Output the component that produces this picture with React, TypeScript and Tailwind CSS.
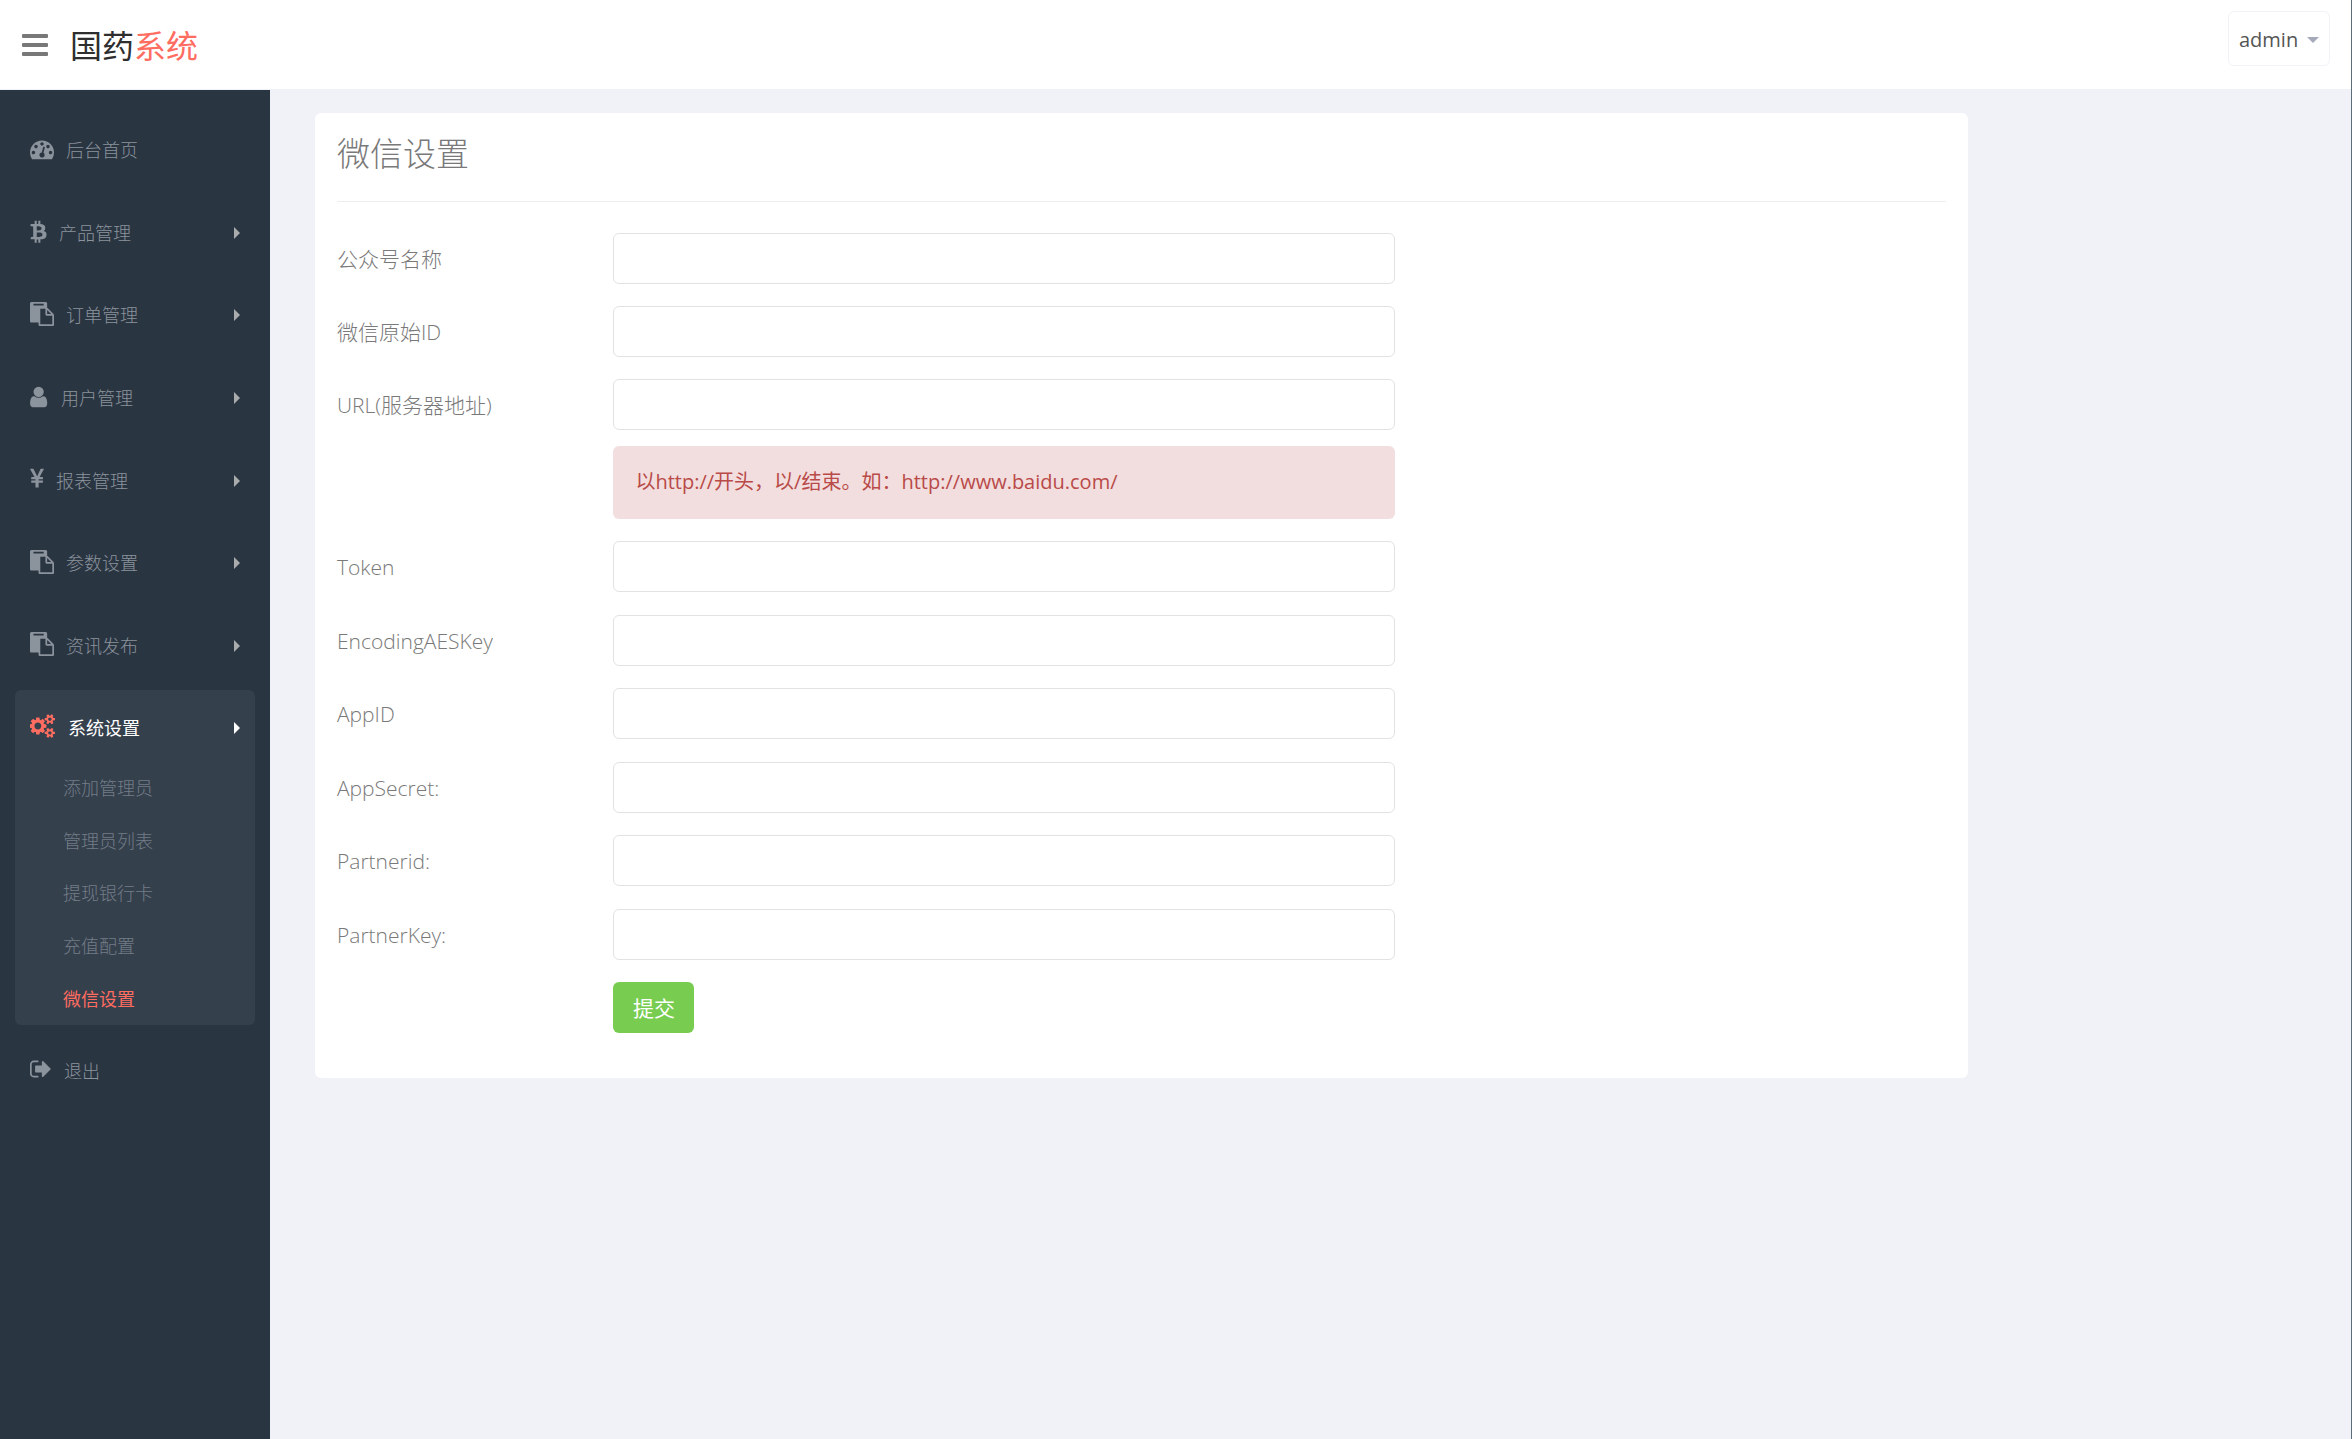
import React from 'react';

interface Glyph {
  viewBox: string;
  width: string;
  path: string;
}

// Font Awesome 4 shapes, cropped to their advance width
const GLYPHS = {
  dashboard: {
    viewBox: '0 0 1792 1792',
    width: 'w-[24px]',
    path: 'M384 1152q0-53-37.5-90.5t-90.5-37.5-90.5 37.5-37.5 90.5 37.5 90.5 90.5 37.5 90.5-37.5 37.5-90.5zm192-448q0-53-37.5-90.5t-90.5-37.5-90.5 37.5-37.5 90.5 37.5 90.5 90.5 37.5 90.5-37.5 37.5-90.5zm428 481l101-382q6-26-7.5-48.5t-38.5-29.5-48 6.5-30 39.5l-101 382q-60 5-107 43.5t-63 98.5q-20 77 20 146t117 89 146-20 89-117q16-60-6-117t-72-91zm660-33q0-53-37.5-90.5t-90.5-37.5-90.5 37.5-37.5 90.5 37.5 90.5 90.5 37.5 90.5-37.5 37.5-90.5zm-640-640q0-53-37.5-90.5t-90.5-37.5-90.5 37.5-37.5 90.5 37.5 90.5 90.5 37.5 90.5-37.5 37.5-90.5zm448 192q0-53-37.5-90.5t-90.5-37.5-90.5 37.5-37.5 90.5 37.5 90.5 90.5 37.5 90.5-37.5 37.5-90.5zm320 448q0 261-141 483-19 29-54 29h-1402q-35 0-54-29-141-221-141-483 0-182 71-348t191-286 286-191 348-71 348 71 286 191 191 286 71 348z',
  },
  bitcoin: {
    viewBox: '64 0 1280 1792',
    width: 'w-[17px]',
    path: 'M1217 629q18 182-131 258 117 28 175 103t45 214q-7 71-32.5 125t-64.5 89-97 58.5-121.5 34.5-145.5 15v255h-154v-251q-80 0-122-1v252h-154v-255q-18 0-54-.5t-55-.5h-200l31-183h111q50 0 58-51v-402h16q-6-1-16-1v-287q-13-68-89-68h-111v-164l212 1q64 0 97-1v-252h154v247q82-2 122-2v-245h154v252q79 7 140 22.5t113 45 82.5 78 36.5 114.5zm-215 545q0-36-15-64t-37-46-57.5-30.5-65.5-18.5-74-9-69-3-64.5 1-47.5 1v338q8 0 37 .5t48 .5 53-1.5 58.5-4 57-8.5 55.5-14 47.5-21 39.5-30 24.5-40 9.5-51zm-71-475q0-33-12.5-58.5t-30.5-42-48-28-55-16.5-61.5-8-58-2.5-54 1-39.5.5v307q5 0 34.5.5t46.5 0 50-2 55-5.5 51.5-11 48.5-18.5 37-27 27-38.5 9-51z',
  },
  paste: {
    viewBox: '0 0 1792 1792',
    width: 'w-[24px]',
    path: 'M768 1664h896v-640h-416q-40 0-68-28t-28-68v-416h-384v1152zm256-1440v-64q0-13-9.5-22.5t-22.5-9.5h-704q-13 0-22.5 9.5t-9.5 22.5v64q0 13 9.5 22.5t22.5 9.5h704q13 0 22.5-9.5t9.5-22.5zm256 672h299l-299-299v299zm512 128v672q0 40-28 68t-68 28h-960q-40 0-68-28t-28-68v-160h-544q-40 0-68-28t-28-68v-1344q0-40 28-68t68-28h1088q40 0 68 28t28 68v328q21 13 36 28l408 408q28 28 48 76t20 88z',
  },
  user: {
    viewBox: '256 0 1408 1792',
    width: 'w-[19px]',
    path: 'M1536 1399q0 109-62.5 187t-150.5 78h-854q-88 0-150.5-78t-62.5-187q0-85 8.5-160.5t31.5-152 58.5-131 94-89 134.5-34.5q131 128 313 128t313-128q76 0 134.5 34.5t94 89 58.5 131 31.5 152 8.5 160.5zm-256-887q0 159-112.5 271.5t-271.5 112.5-271.5-112.5-112.5-271.5 112.5-271.5 271.5-112.5 271.5 112.5 112.5 271.5z',
  },
  yen: {
    viewBox: '382 0 1027 1792',
    width: 'w-[14px]',
    path: 'M985.5 1536h-172q-13 0-22.5-9t-9.5-23v-330h-288q-13 0-22.5-9t-9.5-23v-103q0-13 9.5-22.5t22.5-9.5h288v-85h-288q-13 0-22.5-9t-9.5-23v-104q0-13 9.5-22.5t22.5-9.5h214l-321-578q-8-16 0-32 10-16 28-16h194q19 0 29 18l215 425q19 38 56 125 10-24 30.5-68t27.5-61l191-420q8-19 29-19h191q17 0 27 16 9 14 1 31l-313 579h215q13 0 22.5 9.5t9.5 22.5v104q0 14-9.5 23t-22.5 9h-290v85h290q13 0 22.5 9.5t9.5 22.5v103q0 14-9.5 23t-22.5 9h-290v330q0 13-9.5 22.5t-22.5 9.5z',
  },
  cogs: {
    viewBox: '0 0 1920 1792',
    width: 'w-[26px]',
    path: 'M832 896q0-106-75-181t-181-75-181 75-75 181 75 181 181 75 181-75 75-181zm768 512q0-52-38-90t-90-38-90 38-38 90q0 53 37.5 90.5t90.5 37.5 90.5-37.5 37.5-90.5zm0-1024q0-52-38-90t-90-38-90 38-38 90q0 53 37.5 90.5t90.5 37.5 90.5-37.5 37.5-90.5zm-384 421v185q0 10-7 19.5t-16 10.5l-155 24q-11 35-32 76 34 48 90 115 7 11 7 20 0 12-7 19-23 30-82.5 89.5t-78.5 59.5q-11 0-21-7l-115-90q-37 19-77 31-11 108-23 155-7 24-30 24h-186q-11 0-20-7.5t-10-17.5l-23-153q-34-10-75-31l-118 89q-7 7-20 7-11 0-21-8-144-133-144-160 0-9 7-19 10-14 41-53t47-61q-23-44-35-82l-152-24q-10-1-17-9.5t-7-19.5v-185q0-10 7-19.5t16-10.5l155-24q11-35 32-76-34-48-90-115-7-11-7-20 0-12 7-20 22-30 82-89t79-59q11 0 21 7l115 90q34-18 77-32 11-108 23-154 7-24 30-24h186q11 0 20 7.5t10 17.5l23 153q34 10 75 31l118-89q8-7 20-7 11 0 21 8 144 133 144 160 0 8-7 19-12 16-42 54t-45 60q23 48 34 82l152 23q10 2 17 10.5t7 19.5zm640 533v140q0 16-149 31-12 27-30 52 51 113 51 138 0 4-4 7-122 71-124 71-8 0-46-47t-52-68q-20 2-30 2t-30-2q-14 21-52 68t-46 47q-2 0-124-71-4-3-4-7 0-25 51-138-18-25-30-52-149-15-149-31v-140q0-16 149-31 13-29 30-52-51-113-51-138 0-4 4-7 4-2 35-20t59-34 30-16q8 0 46 46.5t52 67.5q20-2 30-2t30 2q51-71 92-112l6-2q4 0 124 70 4 3 4 7 0 25-51 138 17 23 30 52 149 15 149 31zm0-1024v140q0 16-149 31-12 27-30 52 51 113 51 138 0 4-4 7-122 71-124 71-8 0-46-47t-52-68q-20 2-30 2t-30-2q-14 21-52 68t-46 47q-2 0-124-71-4-3-4-7 0-25 51-138-18-25-30-52-149-15-149-31v-140q0-16 149-31 13-29 30-52-51-113-51-138 0-4 4-7 4-2 35-20t59-34 30-16q8 0 46 46.5t52 67.5q20-2 30-2t30 2q51-71 92-112l6-2q4 0 124 70 4 3 4 7 0 25-51 138 17 23 30 52 149 15 149 31z',
  },
  signOut: {
    viewBox: '64 0 1664 1792',
    width: 'w-[22px]',
    path: 'M704 1440q0 4 1 20t.5 26.5-3 23.5-10 19.5-20.5 6.5h-320q-119 0-203.5-84.5t-84.5-203.5v-704q0-119 84.5-203.5t203.5-84.5h320q13 0 22.5 9.5t9.5 22.5q0 4 1 20t.5 26.5-3 23.5-10 19.5-20.5 6.5h-320q-66 0-113 47t-47 113v704q0 66 47 113t113 47h312l11.5 1 11.5 3 8 5.5 7 9 2 13.5zm928-544q0 26-19 45l-544 544q-19 19-45 19t-45-19-19-45v-288h-448q-26 0-45-19t-19-45v-384q0-26 19-45t45-19h448v-288q0-26 19-45t45-19 45 19l544 544q19 19 19 45z',
  },
} satisfies Record<string, Glyph>;

type IconName = keyof typeof GLYPHS;

const Icon: React.FC<{ name: IconName; className?: string }> = ({ name, className = '' }) => {
  const glyph = GLYPHS[name];
  return (
    <svg
      viewBox={glyph.viewBox}
      className={`h-[24px] ${glyph.width} mr-3 mb-[3px] shrink-0 ${className}`}
      fill="currentColor"
      aria-hidden="true"
    >
      <path d={glyph.path} />
    </svg>
  );
};

interface MenuItem {
  label: string;
  icon: IconName;
  expandable?: boolean;
}

const MENU: MenuItem[] = [
  { label: '后台首页', icon: 'dashboard' },
  { label: '产品管理', icon: 'bitcoin', expandable: true },
  { label: '订单管理', icon: 'paste', expandable: true },
  { label: '用户管理', icon: 'user', expandable: true },
  { label: '报表管理', icon: 'yen', expandable: true },
  { label: '参数设置', icon: 'paste', expandable: true },
  { label: '资讯发布', icon: 'paste', expandable: true },
];

const SUB_MENU = ['添加管理员', '管理员列表', '提现银行卡', '充值配置', '微信设置'];
const CURRENT = '微信设置';

const Arrow = () => (
  <svg viewBox="0 0 6 12" className="h-[12px] w-[6px]" fill="currentColor" aria-hidden="true">
    <path d="M0 0l6 6-6 6z" />
  </svg>
);

const MenuLink: React.FC<{ item: MenuItem }> = ({ item }) => (
  <a href="#" className="flex flex-1 items-center px-[15px] text-[#8b939c]">
    <Icon name={item.icon} />
    <span>{item.label}</span>
    {item.expandable && (
      <span className="ml-auto text-[#aaabac]">
        <Arrow />
      </span>
    )}
  </a>
);

const Sidebar = () => (
  <nav className="w-[270px] shrink-0 bg-[#2a3542] px-[15px] pt-[19px] text-[18px] leading-[24px] font-light">
    <div className="flex min-h-[578px] flex-col">
      {MENU.map((item) => (
        <MenuLink key={item.label} item={item} />
      ))}
    </div>

    <div className="mt-[3px] rounded-md bg-[#35404d]">
      <a href="#" className="flex h-[72px] items-center px-[15px] pt-[3px] font-normal text-white">
        <Icon name="cogs" className="text-[#ff6c60]" />
        <span>系统设置</span>
        <span className="ml-auto">
          <Arrow />
        </span>
      </a>
      <div className="flex min-h-[263px] flex-col">
        {SUB_MENU.map((label) => (
          <a
            key={label}
            href="#"
            className={`flex flex-1 items-center pl-12 ${label === CURRENT ? 'font-normal text-[#ff6c60]' : 'text-[#737c87]'}`}
          >
            {label}
          </a>
        ))}
      </div>
    </div>

    <div className="mt-1 flex h-[83px]">
      <MenuLink item={{ label: '退出', icon: 'signOut' }} />
    </div>
  </nav>
);

const Header = () => (
  <header className="flex h-[90px] items-center border-b border-[#f1f2f7] bg-white pr-[21px] pl-[22px]">
    <button type="button" aria-label="切换菜单" className="flex h-[26px] w-[26px] flex-col justify-between py-[2px]">
      <span className="h-[4px] w-full rounded-[1px] bg-[#787878]" />
      <span className="h-[4px] w-full rounded-[1px] bg-[#787878]" />
      <span className="h-[4px] w-full rounded-[1px] bg-[#787878]" />
    </button>
    <a href="#" className="ml-[22px] pt-[2px] text-[32px] leading-[40px] text-[#2e2e2e]">
      国药<span className="text-[#ff6c60]">系统</span>
    </a>
    <button
      type="button"
      className="mb-[13px] ml-auto flex h-[55px] w-[102px] items-center gap-[9px] rounded-md border border-[#f1f2f7] pt-[3px] pl-[10px] text-[20px] text-[#555555]"
    >
      admin
      <svg viewBox="0 0 12 6" className="h-[6px] w-[12px]" fill="#a4aaba" aria-hidden="true">
        <path d="M0 0h12l-6 6z" />
      </svg>
    </button>
  </header>
);

interface FieldProps {
  id: string;
  label: string;
  children?: React.ReactNode;
}

const Field: React.FC<FieldProps> = ({ id, label, children }) => (
  <div className="grid grid-cols-12">
    <label
      htmlFor={id}
      className="col-span-2 h-[51px] px-[22px] text-[21px] leading-[53px] font-light whitespace-nowrap"
    >
      {label}
    </label>
    <div className="col-span-6 pr-[22px] pl-[23px]">
      <input
        id={id}
        name={id}
        type="text"
        className="block h-[51px] w-full rounded-md border border-[#e2e2e4] bg-white px-[18px] text-[#555555] outline-none"
      />
      {children}
    </div>
  </div>
);

const SettingsForm = () => (
  <form className="mt-[31px] text-[20px]">
    <div className="flex flex-col gap-[22px]">
      <Field id="name" label="公众号名称" />
      <Field id="original_id" label="微信原始ID" />
      <Field id="url" label="URL(服务器地址)">
        <p className="mt-4 flex h-[73px] items-center rounded-md bg-[#f2dede] px-[22px] pb-[2px] text-[#b94a48]">
          以http://开头，以/结束。如：http://www.baidu.com/
        </p>
      </Field>
    </div>
    <div className="mt-[22px] flex min-h-[492px] flex-col justify-between">
      <Field id="token" label="Token" />
      <Field id="encoding_aes_key" label="EncodingAESKey" />
      <Field id="app_id" label="AppID" />
      <Field id="app_secret" label="AppSecret:" />
      <Field id="partner_id" label="Partnerid:" />
      <Field id="partner_key" label="PartnerKey:" />
      <div className="grid grid-cols-12">
        <div className="col-span-6 col-start-3 pr-[22px] pl-[23px]">
          <button type="submit" className="h-[51px] w-[81px] rounded-md bg-[#78cd51] pt-[2px] text-[21px] text-white">
            提交
          </button>
        </div>
      </div>
    </div>
  </form>
);

export default function App() {
  return (
    <div className="flex min-h-screen flex-col border-r border-[#5d6d7a] bg-[#f1f2f7] font-['Open_Sans','Noto_Sans_CJK_SC',sans-serif] text-[#797979]">
      <Header />
      <div className="flex flex-1">
        <Sidebar />
        <main className="min-w-0 flex-1 pt-[23px] pr-[22px] pl-[23px]">
          <div className="w-10/12 px-[22px]">
            <section className="rounded-md bg-white pb-[45px]">
              <h1 className="mx-[22px] flex h-[89px] items-center border-b border-[#eeeeee] pb-[7px] text-[33px] font-light">
                微信设置
              </h1>
              <SettingsForm />
            </section>
          </div>
        </main>
      </div>
    </div>
  );
}
